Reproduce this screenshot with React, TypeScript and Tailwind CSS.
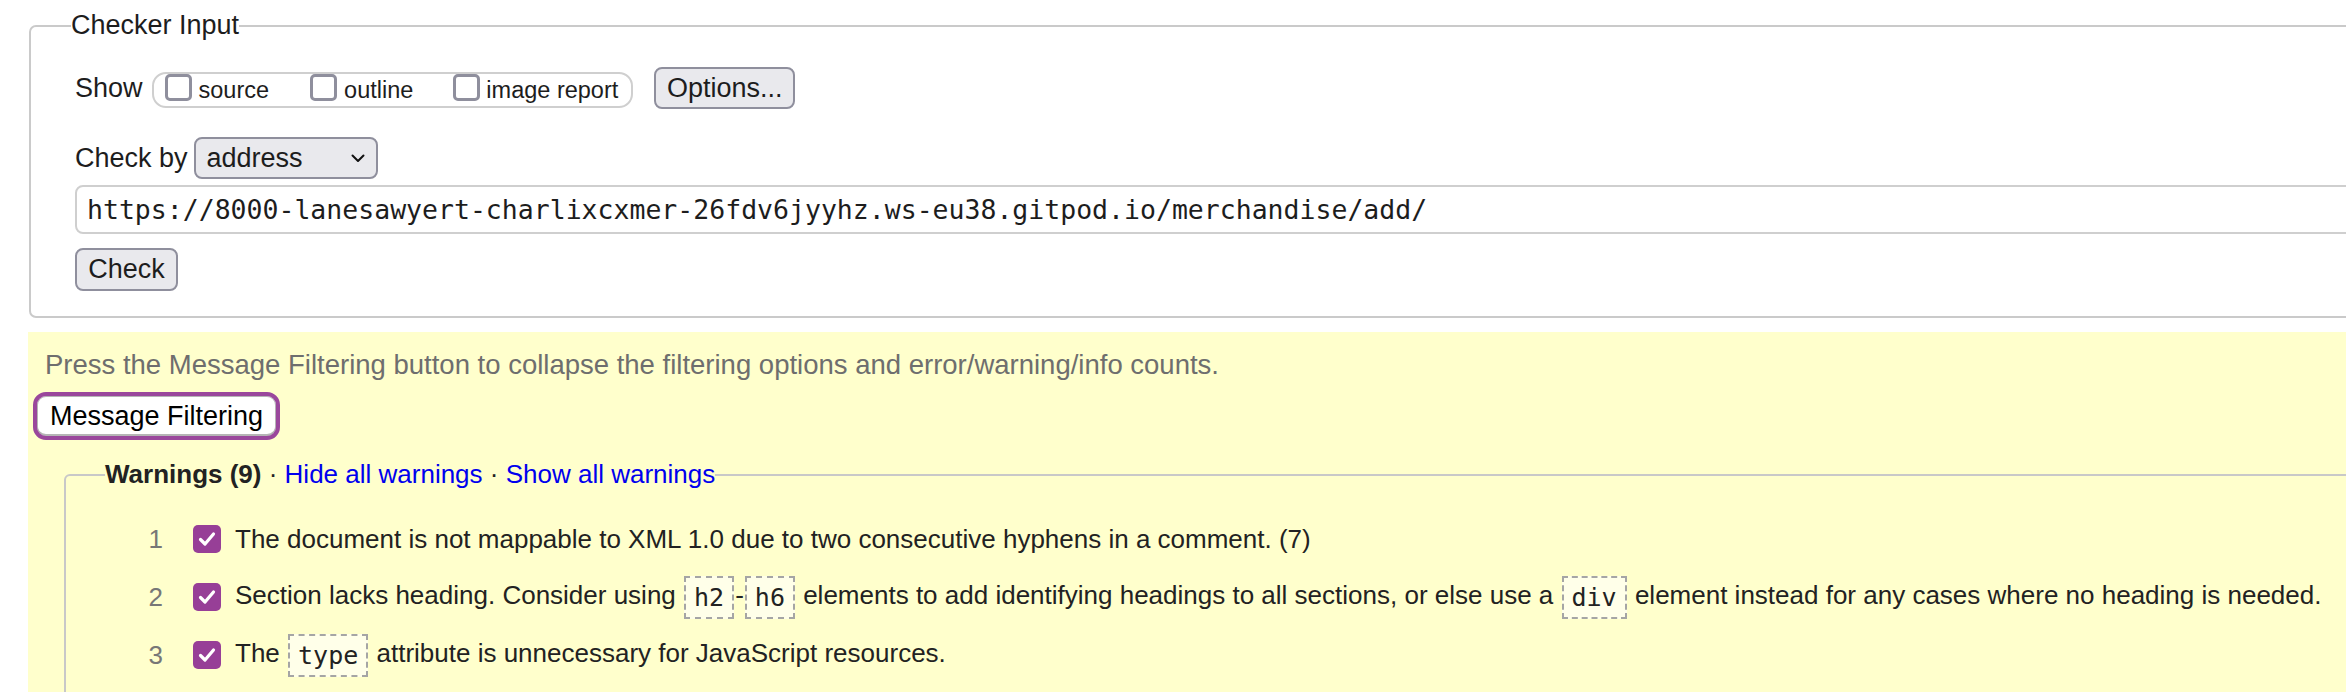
import type { ReactNode } from 'react';

function Chevron() {
  return (
    <svg width="14" height="9" viewBox="0 0 14 9" fill="none">
      <path d="M1.5 1.5 7 7l5.5-5.5" stroke="#111" strokeWidth="2" strokeLinecap="round" strokeLinejoin="round" />
    </svg>
  );
}

function Box() {
  return <span className="inline-block h-[27px] w-[27px] shrink-0 rounded-[5px] border-[3px] border-[#8f8f9d] bg-white" />;
}

function Checked() {
  return (
    <svg width="28" height="28" viewBox="0 0 28 28" className="shrink-0">
      <rect width="28" height="28" rx="5" fill="#973f97" />
      <path d="M7.5 14.5l4.5 4.5 8.5-10" stroke="#fff" strokeWidth="3.2" fill="none" strokeLinecap="round" strokeLinejoin="round" />
    </svg>
  );
}

function Code({ children }: { children: ReactNode }) {
  return (
    <code className="mx-[1px] inline-block h-[43px] border-2 border-dashed border-[#a5a5a5] bg-[#ffffe9] px-[8px] align-middle font-['DejaVu_Sans_Mono',monospace] text-[25px] leading-[39px] text-[#222]">
      {children}
    </code>
  );
}

const messages: ReactNode[] = [
  <>The document is not mappable to XML 1.0 due to two consecutive hyphens in a comment. (7)</>,
  <>
    Section lacks heading. Consider using <Code>h2</Code>-<Code>h6</Code> elements to add identifying headings to all
    sections, or else use a <Code>div</Code> element instead for any cases where no heading is needed.
  </>,
  <>
    The <Code>type</Code> attribute is unnecessary for JavaScript resources.
  </>,
];

export default function App() {
  return (
    <div className="h-[692px] w-full overflow-hidden bg-white font-['Liberation_Sans',Arial,sans-serif] text-[27px] text-[#1d1d1d]">
      <fieldset className="ml-[29px] mt-[10px] w-[2400px] rounded-[7px] border-2 border-[#cacaca] pb-[25px] pl-[44px] pt-[26px]">
        <legend className="-ml-[4px] leading-[31px]">Checker Input</legend>

        <div className="flex h-[42px] items-center">
          <span className="leading-[31px]">Show</span>
          <span className="ml-[9px] mt-[3px] flex h-[36px] items-start rounded-[14px] border-2 border-[#cfcfcf] pl-[11px] pr-[13px] text-[23.5px] leading-[27px]">
            <Box />
            <span className="ml-[7px] pt-[3px]">source</span>
            <span className="ml-[41px]"><Box /></span>
            <span className="ml-[7px] pt-[3px]">outline</span>
            <span className="ml-[40px]"><Box /></span>
            <span className="ml-[6px] pt-[3px]">image report</span>
          </span>
          <button className="ml-[21px] h-[42px] w-[141px] rounded-[8px] border-2 border-[#8f8f9d] bg-[#e9e9ed] leading-[31px]">
            Options...
          </button>
        </div>

        <div className="mt-[28px] flex h-[42px] items-center">
          <span className="leading-[31px]">Check by</span>
          <span className="ml-[6px] flex h-[42px] w-[184px] items-center justify-between rounded-[8px] border-2 border-[#8f8f9d] bg-[#e9e9ed] pl-[11px] pr-[11px] leading-[31px]">
            address
            <Chevron />
          </span>
        </div>

        <div className="mt-[6px] flex h-[49px] w-[2400px] items-center rounded-[8px] border-2 border-[#cfcfcf] pl-[10px] font-['DejaVu_Sans_Mono',monospace] text-[26.5px] whitespace-nowrap">
          https://8000-lanesawyert-charlixcxmer-26fdv6jyyhz.ws-eu38.gitpod.io/merchandise/add/
        </div>

        <button className="mt-[14px] block h-[43px] w-[103px] rounded-[8px] border-2 border-[#8f8f9d] bg-[#e9e9ed] leading-[31px]">
          Check
        </button>
      </fieldset>

      <div className="ml-[28px] mt-[14px] w-[2400px] bg-[#ffffcc] pl-[17px] pt-[17px] pb-[40px]">
        <p className="text-[27.5px] leading-[31px] text-[#6e6e6e]">
          Press the Message Filtering button to collapse the filtering options and error/warning/info counts.
        </p>
        <button className="-ml-[12px] mt-[12px] block h-[48px] w-[247px] rounded-[13px] border-[4px] border-[#9a479c] bg-white leading-[31px] text-black shadow-[inset_0_0_0_1px_#b5b5b5,inset_0_-2px_0_#b5b5b5]">
          Message Filtering
        </button>

        <fieldset className="ml-[19px] mt-[19px] h-[400px] rounded-[6px] border-2 border-[#c8c8c8] text-[26px] text-[#222]">
          <legend className="ml-[39px] leading-[31px] whitespace-nowrap">
            <b>Warnings (9)</b> · <a className="text-[#0000ee]">Hide all warnings</a> ·{' '}
            <a className="text-[#0000ee]">Show all warnings</a>
          </legend>
          <ol className="pt-[20px]">
            {messages.map((m, i) => (
              <li key={i} className="flex h-[58px] items-center whitespace-nowrap">
                <span className="w-[97px] text-right text-[#777]">{i + 1}</span>
                <span className="ml-[30px] flex"><Checked /></span>
                <span className="ml-[14px] leading-[31px]">{m}</span>
              </li>
            ))}
          </ol>
        </fieldset>
      </div>
    </div>
  );
}
